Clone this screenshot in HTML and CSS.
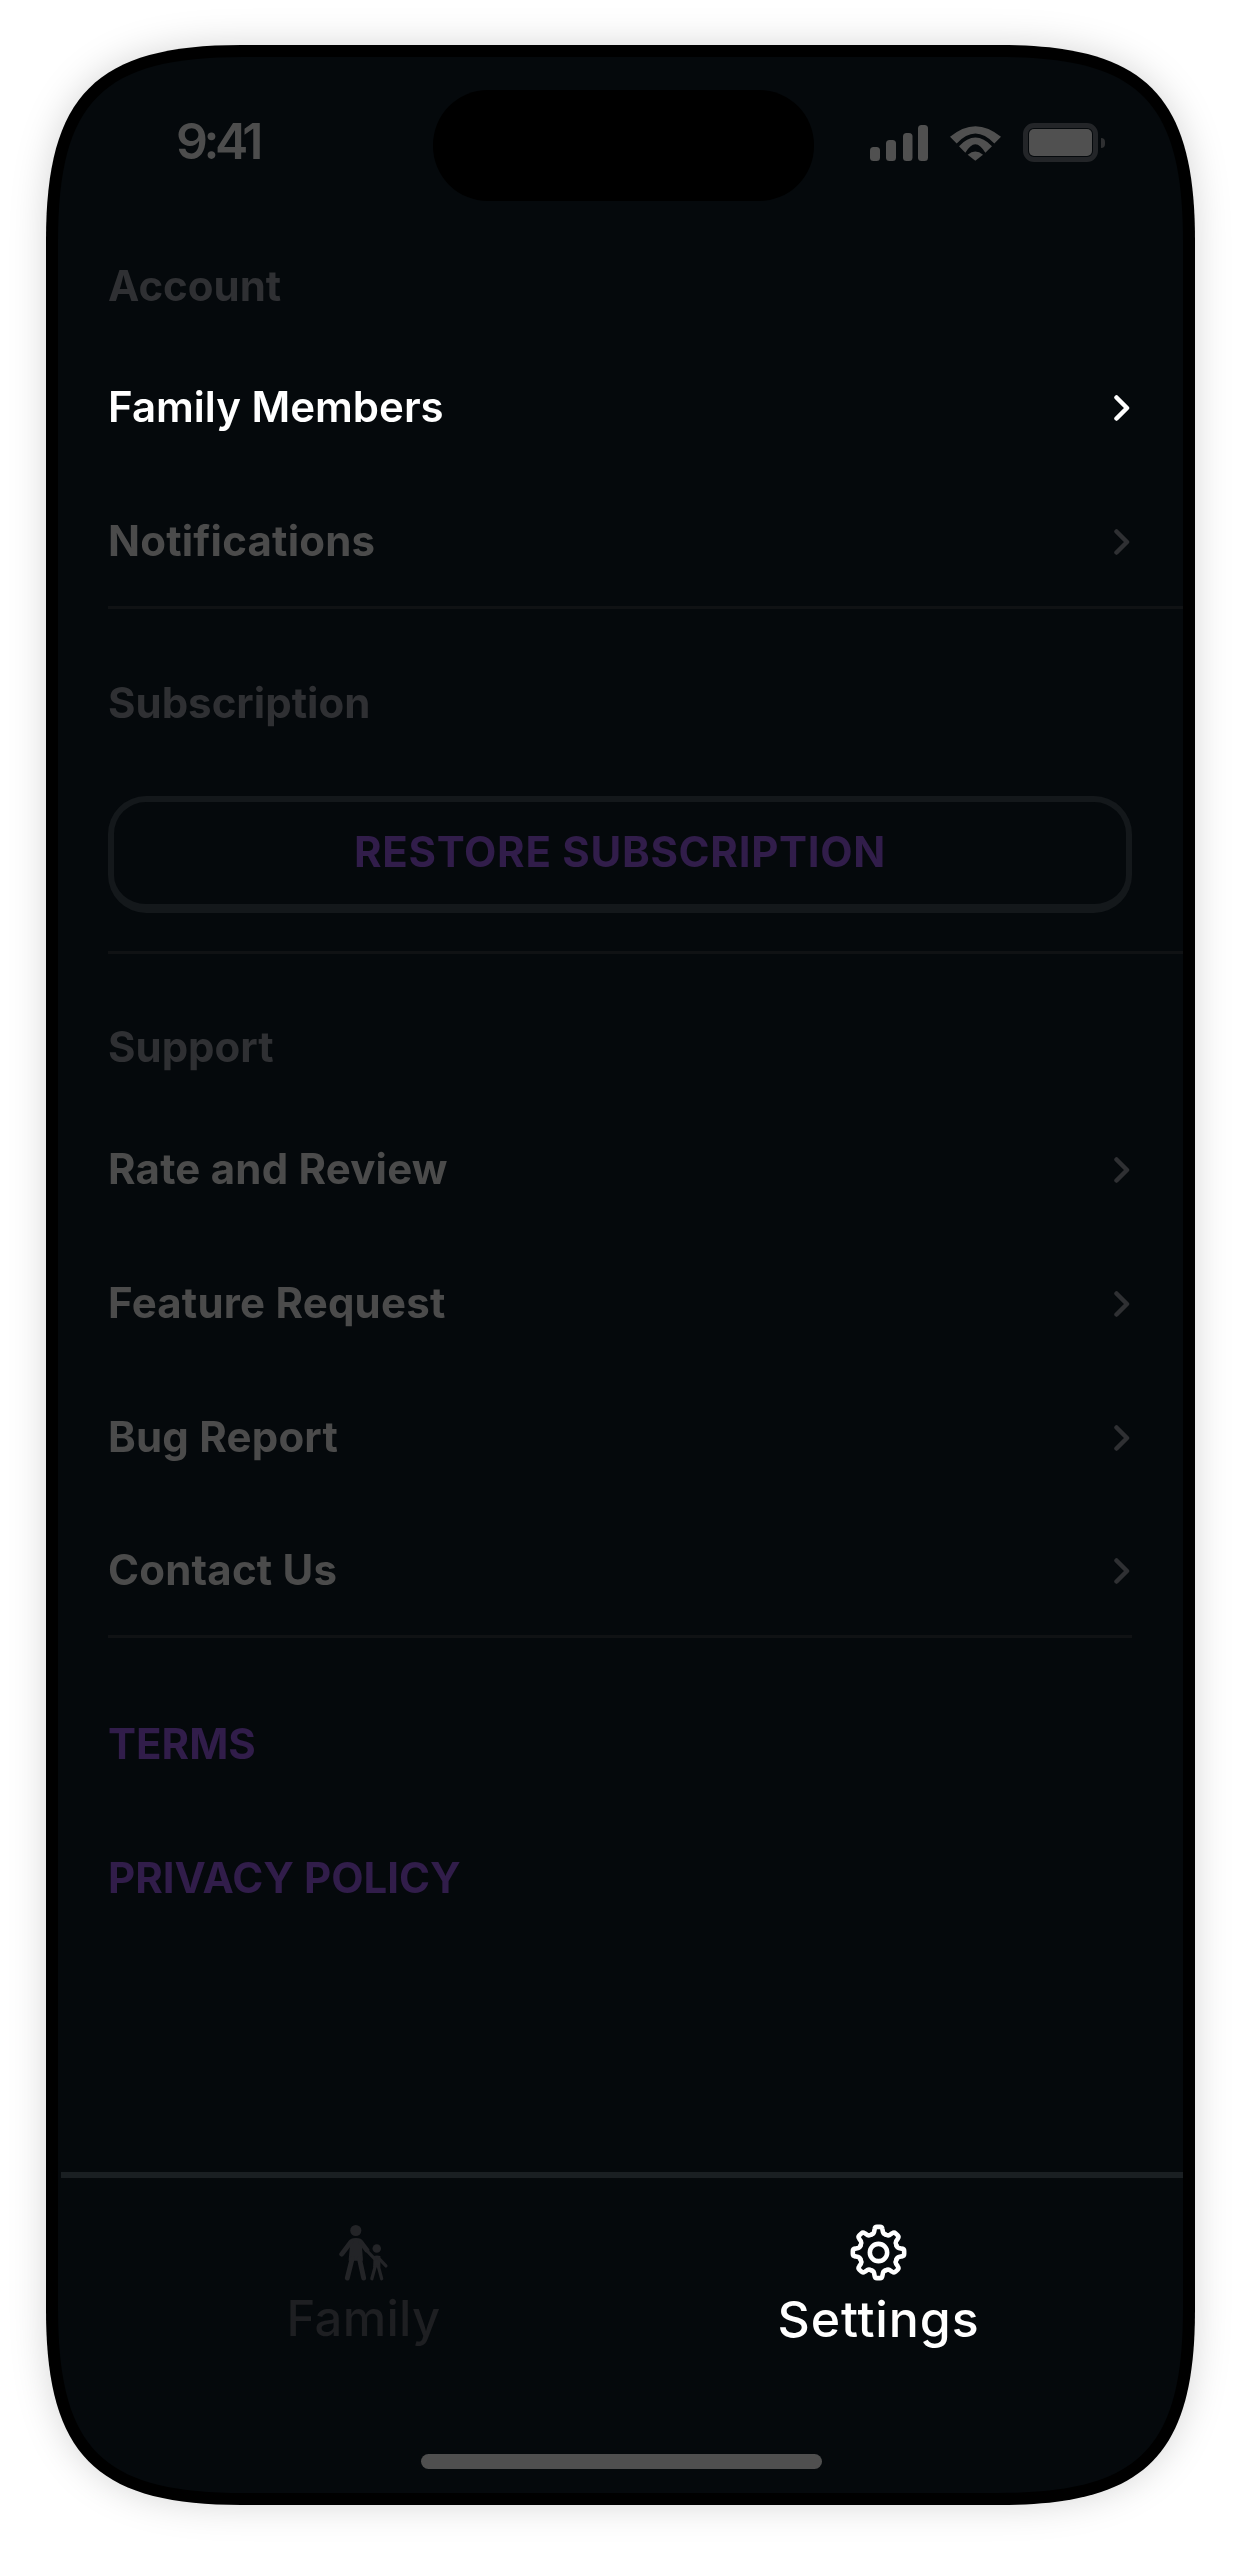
FILE: index.html
```html
<!DOCTYPE html>
<html lang="en">
<head>
<meta charset="utf-8">
<title>Settings</title>
<link rel="stylesheet" href="styles.css">
</head>
<body>
<div class="phone">
  <div class="bezel">
    <div class="screen">
      <div class="island"></div>
      <header class="status">
        <span class="time">9:41</span>
        <div class="status-icons">
          <svg class="signal" viewBox="0 0 58 36"><rect x="0" y="22" width="10" height="14" rx="3.5"/><rect x="16" y="15" width="10" height="21" rx="3.5"/><rect x="33" y="8" width="9.500" height="28" rx="3.5"/><rect x="48" y="0" width="10" height="36" rx="3.5"/></svg>
          <svg class="wifi" viewBox="297 48 153 104"><path d="M297 80Q373 16 450 80L430 100Q373 40 317 100Z"/><path d="M324 108Q373 56 423 108L403 128Q373 76 343 128Z"/><path d="M350 134Q373 114 396 134L373 152Z"/></svg>
          <div class="battery"><div class="battery-fill"></div></div>
          <div class="battery-nub"></div>
        </div>
      </header>
      <main class="content">
        <section class="group">
          <h2 class="heading">Account</h2>
          <a class="row active"><span>Family Members</span><svg class="chev" viewBox="0 0 16 26"><path d="M2.500 2.500L13 13L2.500 23.500"/></svg></a>
          <a class="row"><span>Notifications</span><svg class="chev" viewBox="0 0 16 26"><path d="M2.500 2.500L13 13L2.500 23.500"/></svg></a>
        </section>
        <section class="group group-sub">
          <h2 class="heading">Subscription</h2>
          <div class="restore-wrap"><button class="restore">RESTORE SUBSCRIPTION</button></div>
        </section>
        <section class="group group-support">
          <h2 class="heading">Support</h2>
          <a class="row"><span>Rate and Review</span><svg class="chev" viewBox="0 0 16 26"><path d="M2.500 2.500L13 13L2.500 23.500"/></svg></a>
          <a class="row"><span>Feature Request</span><svg class="chev" viewBox="0 0 16 26"><path d="M2.500 2.500L13 13L2.500 23.500"/></svg></a>
          <a class="row"><span>Bug Report</span><svg class="chev" viewBox="0 0 16 26"><path d="M2.500 2.500L13 13L2.500 23.500"/></svg></a>
          <a class="row"><span>Contact Us</span><svg class="chev" viewBox="0 0 16 26"><path d="M2.500 2.500L13 13L2.500 23.500"/></svg></a>
        </section>
        <section class="legal">
          <a class="legal-link">TERMS</a>
          <a class="legal-link">PRIVACY POLICY</a>
        </section>
      </main>
      <nav class="tabbar">
        <div class="tab">
          <svg class="tab-icon family" viewBox="110 100 153 174">
            <circle cx="163" cy="120" r="17"/>
            <path class="fill" d="M147 146Q163 140 180 146L185 212L141 212Z"/>
            <path d="M120 192L148 155M178 155L197 180M152 205L137 265M174 205L187 265"/>
            <circle cx="227" cy="175" r="13"/>
            <path class="fill" d="M217 198Q227 194 238 198L238 232L216 232Z"/>
            <path class="thin" d="M201 186L220 206M234 206L255 228M222 230L212 267M232 230L242 267"/>
          </svg>
          <span class="tab-label">Family</span>
        </div>
        <div class="tab on">
          <svg class="tab-icon gear" viewBox="-28 -28 56 56">
            <circle cx="0" cy="0" r="8.500"/>
            <path id="tooth" d="M-7.300 -17.500Q-5 -18 -4.400 -20L-3.800 -23Q-3.500 -25.200 -1.500 -25.200L1.500 -25.200Q3.500 -25.200 3.800 -23L4.400 -20Q5 -18 7.300 -17.500"/>
            <use href="#tooth" transform="rotate(45)"/>
            <use href="#tooth" transform="rotate(90)"/>
            <use href="#tooth" transform="rotate(135)"/>
            <use href="#tooth" transform="rotate(180)"/>
            <use href="#tooth" transform="rotate(225)"/>
            <use href="#tooth" transform="rotate(270)"/>
            <use href="#tooth" transform="rotate(315)"/>
          </svg>
          <span class="tab-label">Settings</span>
        </div>
      </nav>
      <div class="home"></div>
    </div>
  </div>
</div>
</body>
</html>
```

FILE: styles.css
```css
* { box-sizing: border-box; }
html, body { margin: 0; padding: 0; background: #fff; }
body { font-family: Inter, "Liberation Sans", sans-serif; height: 2550px; overflow: hidden; padding: 45px 0 0 46px; }

.phone { width: 1149px; height: 2460px; filter: drop-shadow(0 0 18px rgba(0,0,0,.16)); }
.bezel {
  width: 1149px; height: 2460px; padding: 12px; background: #000;
  clip-path: path("M0 195C0 50 50 0 195 0L954 0C1099 0 1149 50 1149 195L1149 2265C1149 2410 1099 2460 954 2460L195 2460C50 2460 0 2410 0 2265Z");
}
.screen {
  position: relative; width: 1125px; height: 2436px; background: #05090c;
  display: flex; flex-direction: column;
  clip-path: path("M0 185C0 44 44 0 185 0L940 0C1081 0 1125 44 1125 185L1125 2251C1125 2392 1081 2436 940 2436L185 2436C44 2436 0 2392 0 2251Z");
}
.island { position: absolute; left: 375px; top: 33px; width: 381px; height: 111px; border-radius: 55px; background: #000; }
.home { position: absolute; left: 363px; bottom: 24px; width: 401px; height: 15px; border-radius: 8px; background: #4f4f4f; }

.status { height: 204px; padding: 66px 78px 0 118px; display: flex; justify-content: space-between; align-items: flex-start; }
.time { font-size: 50px; line-height: 36px; font-weight: 600; letter-spacing: -4.500px; color: #4d4d4d; }
.status-icons { display: flex; align-items: flex-start; }
.signal { width: 58px; height: 36px; margin-top: 2px; fill: #505050; }
.wifi { width: 51px; height: 35px; margin: 3px 22px 0 22px; fill: #505050; }
.battery { width: 75px; height: 39px; border: 5px solid #232528; border-radius: 11px; padding: 1px; }
.battery-fill { width: 100%; height: 100%; background: #505050; border-radius: 5px; }
.battery-nub { width: 4px; height: 10px; margin: 15px 0 0 3px; background: #2e2f31; border-radius: 0 5px 5px 0; }

.content { flex: 1; }
.group { margin-left: 50px; }
.group-sub { margin-top: 69px; }
.group-support { margin-top: 68px; margin-right: 51px; }
.heading { margin: 0; font-size: 42px; line-height: 50px; font-weight: 700; color: #2f3033; }
.row { height: 134px; padding-right: 51px; display: flex; align-items: center; justify-content: space-between; font-size: 42px; font-weight: 700; letter-spacing: .2px; color: #4b4b4b; }
.group .heading + .row { margin-top: 29px; }
.row.active { color: #fff; font-weight: 600; letter-spacing: 0; padding-bottom: 2px; }
.chev { width: 16px; height: 26px; margin: 3px 2px 0 0; fill: none; stroke: #2f3033; stroke-width: 4.500; stroke-linecap: round; stroke-linejoin: round; }
.active .chev { stroke: #fff; margin-top: 4px; }

.group:first-child .row:last-child { height: 132px; }
.group:first-child, .group-sub, .group-support { border-bottom: 3px solid #101214; }
.restore-wrap { padding: 68px 51px 38px 0; }
.restore { display: block; width: 100%; height: 117px; border-style: solid; border-width: 6px 6px 9px; border-color: #14181b; border-radius: 38px; padding: 0 0 3px; background: transparent; font: 700 42px Inter, sans-serif; letter-spacing: .7px; color: #311d4a; }
.group-support .row { padding-right: 0; }
.group-support .row:last-child { height: 132px; }

.legal { padding: 38px 0 0 50px; }
.legal-link { display: flex; align-items: center; height: 134px; font-size: 42px; font-weight: 700; color: #311d4a; }

.tabbar { height: 321px; margin-left: 3px; padding: 0 47px 0 45px; border-top: 6px solid #1a1f22; display: grid; grid-template-columns: 515px 515px; }
.tab { display: flex; flex-direction: column; align-items: center; padding-top: 46px; }
.tab-icon { display: block; height: 57px; }
.family { width: 51px; fill: #232427; stroke: #232427; }
.family circle { stroke: none; }
.family path { fill: none; stroke-width: 15; stroke-linecap: round; stroke-linejoin: round; }
.family path.fill { fill: #232427; stroke: none; }
.family path.thin { stroke-width: 10; }
.gear { width: 57px; fill: none; stroke: #fff; stroke-width: 4.500; stroke-linecap: round; stroke-linejoin: round; }
.tab-label { margin-top: 8px; font-size: 49px; line-height: 60px; font-weight: 500; letter-spacing: .3px; color: #1e1f22; }
.tab.on .tab-label { font-size: 50px; letter-spacing: .9px; color: #fff; }
```
